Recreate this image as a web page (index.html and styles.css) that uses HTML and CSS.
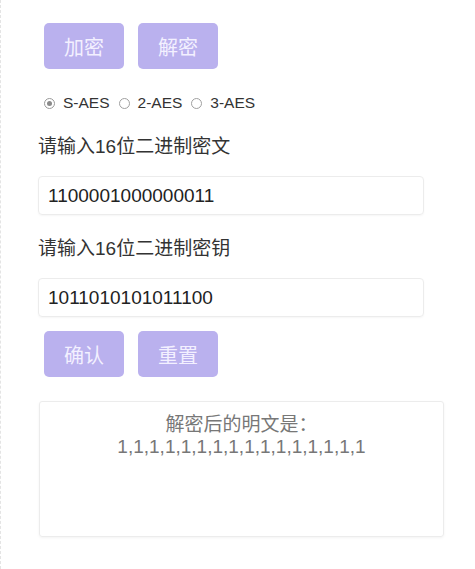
FILE: index.html
```html
<!DOCTYPE html>
<html lang="zh">
<head>
<meta charset="utf-8">
<link rel="stylesheet" href="styles.css">
</head>
<body>
<div class="page">
  <div class="btn-row">
    <button class="btn">加密</button>
    <button class="btn">解密</button>
  </div>
  <div class="radio-row">
    <label class="radio"><span class="dot checked"></span>S-AES</label>
    <label class="radio"><span class="dot"></span>2-AES</label>
    <label class="radio"><span class="dot"></span>3-AES</label>
  </div>
  <div class="label first">请输入16位二进制密文</div>
  <div class="input">1100001000000011</div>
  <div class="label">请输入16位二进制密钥</div>
  <div class="input">1011010101011100</div>
  <div class="btn-row second">
    <button class="btn">确认</button>
    <button class="btn">重置</button>
  </div>
  <div class="result">
    <div>解密后的明文是：</div>
    <div class="nums">1,1,1,1,1,1,1,1,1,1,1,1,1,1,1,1</div>
  </div>
</div>
</body>
</html>
```
FILE: styles.css
```css
* { box-sizing: border-box; }
html, body { margin: 0; background: #fff; }
body {
  font-family: "Liberation Sans", "Noto Sans CJK SC", sans-serif;
  color: #222;
}
.page {
  min-height: 569px;
  border-left: 1px dashed #e4e4e4;
  padding: 23px 0 0 37px;
}
.btn-row {
  display: flex;
  gap: 14px;
  padding-left: 6px;
}
.btn-row.second { margin-top: 14px; }
.btn {
  width: 80px;
  height: 46px;
  border: none;
  border-radius: 5px;
  background: #bab1ee;
  color: #f3f0ff;
  font-family: "Noto Sans CJK SC", sans-serif;
  font-size: 20px;
  padding: 0;
}
.radio-row {
  display: flex;
  align-items: center;
  gap: 9px;
  margin-top: 25px;
  padding-left: 6px;
  height: 18px;
  font-size: 15.5px;
  color: #333;
}
.radio {
  display: flex;
  align-items: center;
}
.dot {
  width: 11px;
  height: 11px;
  border-radius: 50%;
  border: 1px solid #a0a0a0;
  margin-right: 8px;
  position: relative;
}
.dot.checked { border-color: #999; }
.dot.checked::after {
  content: "";
  position: absolute;
  left: 2px; top: 2px;
  width: 5px; height: 5px;
  border-radius: 50%;
  background: #8a8a8a;
}
.label {
  font-family: "Liberation Sans", "Noto Sans CJK SC", sans-serif;
  font-size: 19px;
  line-height: 24px;
  color: #333;
  margin-top: 22px;
}
.label.first { margin-top: 23px; }
.input {
  margin-top: 17px;
  width: 386px;
  height: 39px;
  border: 1px solid #ececec;
  border-radius: 4px;
  box-shadow: 0 1px 2px rgba(0,0,0,0.04);
  padding-left: 9px;
  font-size: 19px;
  line-height: 37px;
  color: #222;
}
.result {
  margin-top: 24px;
  margin-left: 1px;
  width: 405px;
  height: 136px;
  border: 1px solid #ececec;
  border-radius: 3px;
  box-shadow: 0 1px 3px rgba(0,0,0,0.05);
  padding-top: 9px;
  text-align: center;
  font-size: 19px;
  line-height: 24px;
  color: #777;
  font-family: "Noto Sans CJK SC", sans-serif;
}
.result .nums { font-family: "Liberation Sans", sans-serif; }
```
